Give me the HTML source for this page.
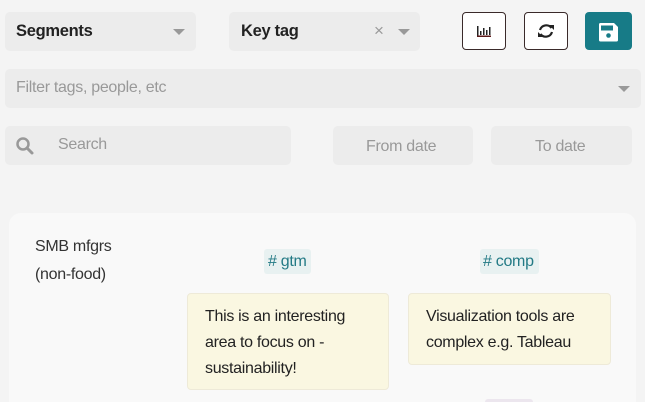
<!DOCTYPE html>
<html><head><style>
*{box-sizing:border-box;margin:0;padding:0}
html,body{width:645px;height:402px;overflow:hidden}
body{background:#f4f4f4;font-family:"Liberation Sans",sans-serif;position:relative;color:#222}
.b{position:absolute;background:#ececec;border-radius:5px}
.t{position:absolute;font-size:16px;letter-spacing:-0.3px}
.caret{position:absolute;width:0;height:0;border-left:6px solid transparent;border-right:6px solid transparent;border-top:6px solid #999}
.btn{position:absolute;top:12px;width:44px;height:38px;border:1px solid #3a2a2a;border-radius:4px;background:#fff}
</style></head><body>
<div class="b" style="left:5px;top:12px;width:191px;height:39px"></div>
<div class="t" style="left:16px;top:22px;font-weight:bold;font-size:16.5px">Segments</div>
<div class="caret" style="left:173px;top:29px"></div>
<div class="b" style="left:229px;top:12px;width:191px;height:39px"></div>
<div class="t" style="left:241px;top:22px;font-weight:bold;font-size:16.5px">Key tag</div>
<div class="t" style="left:374px;top:21px;color:#999;font-size:17px">×</div>
<div class="caret" style="left:398px;top:29px"></div>
<div class="btn" style="left:462px"><svg width="44" height="38" style="position:absolute;left:-1px;top:-1px"><g fill="#222"><rect x="15" y="14" width="1.5" height="11"/><rect x="15" y="23.5" width="14" height="1.5" fill="#5a1a1a"/><rect x="18" y="19" width="1.5" height="4"/><rect x="21" y="16" width="1.5" height="7"/><rect x="24" y="18" width="1.5" height="5"/><rect x="27" y="15" width="1.5" height="8"/></g></svg></div>
<div class="btn" style="left:524px"><svg width="44" height="38" style="position:absolute;left:-1px;top:-1px"><g fill="none" stroke="#222" stroke-width="2.2"><path d="M16 18 A6.5 6.5 0 0 1 27.5 16"/><path d="M28 20 A6.5 6.5 0 0 1 16.5 22"/></g><path d="M25 13 L30 13 L30 18 Z" fill="#222"/><path d="M19 25 L14 25 L14 20 Z" fill="#222"/></svg></div>
<div style="position:absolute;left:585px;top:12px;width:47px;height:38px;background:#177b87;border-radius:4px"><svg width="47" height="38"><path d="M14 11 h15 l4 4 v13 a1.5 1.5 0 0 1 -1.5 1.5 h-16 a1.5 1.5 0 0 1 -1.5 -1.5 v-15.5 a1.5 1.5 0 0 1 1.5 -1.5z" fill="#fff"/><rect x="16" y="13.5" width="12" height="5" fill="#177b87"/><circle cx="23.5" cy="23.5" r="2.3" fill="#177b87"/></svg></div>
<div class="b" style="left:5px;top:69px;width:636px;height:39px"></div>
<div class="t" style="left:16px;top:79px;color:#999">Filter tags, people, etc</div>
<div class="caret" style="left:618px;top:86px"></div>
<div class="b" style="left:5px;top:126px;width:286px;height:39px"></div>
<svg style="position:absolute;left:15px;top:136px" width="20" height="20"><circle cx="8" cy="8" r="5.5" fill="none" stroke="#999" stroke-width="2.5"/><path d="M12 12 L17 17" stroke="#999" stroke-width="3" stroke-linecap="round"/></svg>
<div class="t" style="left:58px;top:136px;color:#999">Search</div>
<div class="b" style="left:333px;top:126px;width:140px;height:39px"></div>
<div class="t" style="left:366px;top:138px;color:#999">From date</div>
<div class="b" style="left:491px;top:126px;width:141px;height:39px"></div>
<div class="t" style="left:535px;top:138px;color:#999">To date</div>
<div style="position:absolute;left:9px;top:213px;width:627px;height:200px;background:#f9f9f9;border-radius:12px"></div>
<div class="t" style="left:35px;top:233px;line-height:28px;color:#333">SMB mfgrs<br>(non-food)</div>
<div style="position:absolute;left:264px;top:249px;width:47px;height:25px;background:#e8f1f1;border-radius:3px"></div>
<div class="t" style="left:268px;top:253px;color:#237a85">#&nbsp;gtm</div>
<div style="position:absolute;left:480px;top:249px;width:59px;height:25px;background:#e8f1f1;border-radius:3px"></div>
<div class="t" style="left:483px;top:253px;color:#237a85">#&nbsp;comp</div>
<div style="position:absolute;left:187px;top:293px;width:202px;height:97px;background:#faf7e1;border:1px solid #eeead8;border-radius:4px"></div>
<div class="t" style="left:205px;top:304px;line-height:26px;color:#222">This is an interesting<br>area to focus on -<br>sustainability!</div>
<div style="position:absolute;left:408px;top:293px;width:203px;height:72px;background:#faf7e1;border:1px solid #eeead8;border-radius:4px"></div>
<div class="t" style="left:426px;top:304px;line-height:26px;color:#222">Visualization tools are<br>complex e.g. Tableau</div>
<div style="position:absolute;left:485px;top:399px;width:48px;height:10px;background:#ece6ee;border-radius:3px"></div>
</body></html>
